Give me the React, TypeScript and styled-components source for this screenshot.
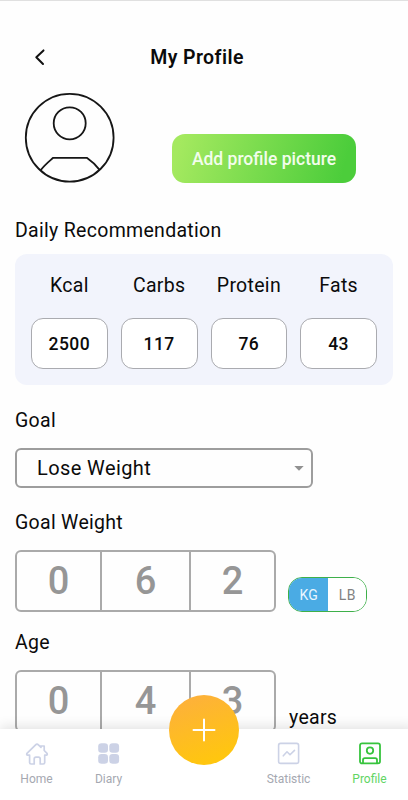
import React from "react";
import styled, { createGlobalStyle } from "styled-components";

const GlobalStyle = createGlobalStyle`
  * { box-sizing: border-box; }
  body { margin: 0; background: #fff; font-family: Roboto, "Liberation Sans", sans-serif; color: #0b0b0b; }
  button { font: inherit; color: inherit; background: none; border: 0; padding: 0; margin: 0; }
`;

const Screen = styled.div`
  width: 408px;
  height: 800px;
  display: flex;
  flex-direction: column;
  overflow: hidden;
  border-top: 1px solid #e0e0e0;
  background: #fefefe;
`;

const Content = styled.main`
  flex: 1;
  min-height: 0;
  overflow: hidden;
  padding: 32px 15px 0;
`;

const Header = styled.header`
  display: grid;
  grid-template-columns: 49px 1fr 63px;
  align-items: center;
  height: 48px;
`;

const BackButton = styled.button`
  display: flex;
  justify-content: center;
  svg { display: block; }
`;

const Title = styled.h1`
  margin: 0;
  padding-top: 2px;
  font-size: 19.5px;
  line-height: 24px;
  font-weight: 600;
  letter-spacing: 0.42px;
  text-align: center;
`;

const ProfileRow = styled.section`
  display: flex;
  align-items: flex-end;
  height: 102px;
  padding-left: 9px;
`;

const PictureButton = styled.button`
  width: 184px;
  height: 49px;
  margin-left: 57px;
  border-radius: 13px;
  background: linear-gradient(105deg, #a4e95f 5%, #4ccd3b 92%);
  color: #f2fdec;
  font-size: 17.5px;
  font-weight: 500;
  letter-spacing: 0;
`;

const Label = styled.h2<{ $top: number; $bottom: number }>`
  margin: 0;
  padding-top: ${(p) => p.$top}px;
  padding-bottom: ${(p) => p.$bottom}px;
  font-size: 19.5px;
  line-height: 24px;
  font-weight: 400;
  letter-spacing: 0.3px;
`;

const NutrientPanel = styled.section`
  display: grid;
  grid-template-columns: repeat(4, 1fr);
  column-gap: 13px;
  height: 131px;
  padding: 19px 16px 0;
  border-radius: 12px;
  background: #f2f4fc;
`;

const Nutrient = styled.div`
  display: flex;
  flex-direction: column;
  align-items: center;
  white-space: nowrap;
`;

const NutrientName = styled.span`
  font-size: 19.5px;
  line-height: 26px;
  letter-spacing: 0.3px;
`;

const NutrientValue = styled.span`
  display: flex;
  align-items: center;
  justify-content: center;
  width: 100%;
  height: 51px;
  margin-top: 19px;
  border: 1px solid #aaabb0;
  border-radius: 12px;
  background: #fff;
  font-size: 17.5px;
  font-weight: 500;
  letter-spacing: 0.5px;
`;

const GoalSelect = styled.button`
  display: flex;
  align-items: center;
  justify-content: space-between;
  width: 298px;
  height: 40px;
  padding: 0 7px 0 20px;
  border: 2px solid #9d9d9d;
  border-radius: 6px;
  font-size: 20px;
  letter-spacing: 0.4px;
`;

const InputRow = styled.div`
  display: flex;
  align-items: flex-end;
  gap: 12px;
  height: 62px;
`;

const DigitGroup = styled.div`
  display: grid;
  grid-template-columns: 85px 89px 1fr;
  width: 261px;
  height: 62px;
  border: 2px solid #aaa;
  border-radius: 6px;
`;

const Digit = styled.span`
  display: flex;
  align-items: center;
  justify-content: center;
  font-size: 38px;
  line-height: 58px;
  font-weight: 500;
  color: #969696;
  &:not(:last-child) { border-right: 2px solid #aaa; }
`;

const UnitToggle = styled.div`
  display: flex;
  width: 79px;
  height: 35px;
  overflow: hidden;
  border: 1.5px solid #3eb04a;
  border-radius: 14px;
`;

const Unit = styled.button<{ $active?: boolean }>`
  flex: 1;
  padding-left: 1px;
  background: ${(p) => (p.$active ? "#4aabe4" : "#fff")};
  color: ${(p) => (p.$active ? "#e9f6ff" : "#828282")};
  font-size: 14px;
  letter-spacing: 0.3px;
`;

const UnitText = styled.span`
  align-self: flex-end;
  padding: 0 0 2px 1px;
  font-size: 19.5px;
  line-height: 24px;
  letter-spacing: 0.3px;
`;

const NavBar = styled.nav`
  position: relative;
  flex: none;
  display: grid;
  grid-template-columns: 73px 71px 108px 73px 89px;
  width: 414px;
  height: 71px;
  background: #fff;
  box-shadow: 0 -2px 12px rgba(0, 0, 0, 0.12);
`;

const NavItem = styled.button<{ $active?: boolean }>`
  display: flex;
  flex-direction: column;
  align-items: center;
  padding-top: 13px;
  color: ${(p) => (p.$active ? "#62d564" : "#a5a8b1")};
  font-size: 12px;
  line-height: 14px;
  letter-spacing: 0;
  svg { display: block; margin-bottom: 6px; color: ${(p) => (p.$active ? "#37c43d" : "#ccd2e6")}; }
`;

const AddButton = styled.button`
  position: absolute;
  left: 169px;
  top: -34px;
  display: flex;
  align-items: center;
  justify-content: center;
  width: 70px;
  height: 70px;
  border-radius: 50%;
  background: linear-gradient(160deg, #fdb13a 10%, #ffc60f 85%);
`;

const nutrients = [
  { name: "Kcal", value: 2500 },
  { name: "Carbs", value: 117 },
  { name: "Protein", value: 76 },
  { name: "Fats", value: 43 },
];

const Avatar = () => (
  <svg width="91" height="91" viewBox="0 -1 91 91" fill="none" stroke="#161616" strokeWidth="1.8">
    <circle cx="45.7" cy="44.7" r="43.9" />
    <circle cx="45.7" cy="30.3" r="16" />
    <path d="M16.6 77.3C20.5 72 25 68.5 29.2 64.8H62.8C67.5 68 71.5 71.7 75.6 76.9" strokeLinejoin="round" />
  </svg>
);

const HomeIcon = () => (
  <svg width="24" height="24" viewBox="0 0 24 24" fill="none" stroke="currentColor" strokeWidth="1.7" strokeLinejoin="round" strokeLinecap="round">
    <path d="M4.6 13.2H2.7C1.6 13.2 1.4 12 2.2 11.2L10.6 2.8C11.4 2 12.6 2 13.4 2.8L16 5.3V4H19.2V8.5L21.8 11.2C22.6 12 22.3 13.2 21.3 13.2H19.7V20.5C19.7 21.4 19.1 22 18.2 22H15.2V17C15.2 15.8 14.6 15.2 13.4 15.2H11C9.8 15.2 9.2 15.8 9.2 17V22H6.1C5.2 22 4.6 21.4 4.6 20.5Z" />
  </svg>
);

const DiaryIcon = () => (
  <svg width="24" height="24" viewBox="0 0 24 24" fill="currentColor">
    <rect x="1.2" y="1.2" width="9.8" height="9.5" rx="3.3" />
    <rect x="12.3" y="1.2" width="9.8" height="9.5" rx="3.3" />
    <rect x="1.2" y="12" width="9.8" height="9.8" rx="3.3" />
    <rect x="12.3" y="12" width="9.8" height="9.8" rx="3.3" />
  </svg>
);

const StatisticIcon = () => (
  <svg width="24" height="24" viewBox="0 0 24 24" fill="none" stroke="currentColor" strokeWidth="1.6" strokeLinejoin="round" strokeLinecap="round">
    <rect x="1.6" y="1.4" width="20" height="20" rx="2" />
    <path d="M6.3 13.8L10 9.8L13 12.8L17.5 8.4" />
  </svg>
);

const ProfileIcon = () => (
  <svg width="24" height="24" viewBox="0 0 24 24" fill="none" stroke="currentColor" strokeWidth="1.8" strokeLinejoin="round">
    <rect x="2" y="1.4" width="20" height="20" rx="2" />
    <circle cx="12" cy="8.6" r="3.2" />
    <path d="M5 21.4V18C5 16.8 5.7 16.1 6.9 16.1H17.1C18.3 16.1 19 16.8 19 18V21.4" />
  </svg>
);

function DigitInput({ digits }: { digits: string }) {
  return (
    <DigitGroup>
      {digits.split("").map((digit, i) => (
        <Digit key={i}>{digit}</Digit>
      ))}
    </DigitGroup>
  );
}

export default function App() {
  return (
    <>
      <GlobalStyle />
      <Screen>
        <Content>
          <Header>
            <BackButton aria-label="Back">
              <svg width="12" height="18" viewBox="0 0 12 18" fill="none" stroke="#111" strokeWidth="2" strokeLinecap="round" strokeLinejoin="round">
                <path d="M9.5 2.4L2.3 9.2L9 16" />
              </svg>
            </BackButton>
            <Title>My Profile</Title>
          </Header>
          <ProfileRow>
            <Avatar />
            <PictureButton>Add profile picture</PictureButton>
          </ProfileRow>
          <Label $top={36} $bottom={11}>Daily Recommendation</Label>
          <NutrientPanel>
            {nutrients.map((n) => (
              <Nutrient key={n.name}>
                <NutrientName>{n.name}</NutrientName>
                <NutrientValue>{n.value}</NutrientValue>
              </Nutrient>
            ))}
          </NutrientPanel>
          <Label $top={24} $bottom={15}>Goal</Label>
          <GoalSelect>
            Lose Weight
            <svg width="10" height="5" viewBox="0 0 10 5" fill="#919191">
              <path d="M0.3 0H9.7L5 4.8Z" />
            </svg>
          </GoalSelect>
          <Label $top={23} $bottom={15}>Goal Weight</Label>
          <InputRow>
            <DigitInput digits="062" />
            <UnitToggle>
              <Unit $active>KG</Unit>
              <Unit>LB</Unit>
            </UnitToggle>
          </InputRow>
          <Label $top={19} $bottom={15}>Age</Label>
          <InputRow>
            <DigitInput digits="043" />
            <UnitText>years</UnitText>
          </InputRow>
        </Content>
        <NavBar>
          <NavItem><HomeIcon />Home</NavItem>
          <NavItem><DiaryIcon />Diary</NavItem>
          <span />
          <NavItem><StatisticIcon />Statistic</NavItem>
          <NavItem $active><ProfileIcon />Profile</NavItem>
          <AddButton aria-label="Add">
            <svg width="24" height="24" viewBox="0 0 24 24" stroke="#fff" strokeWidth="2" strokeLinecap="round">
              <path d="M12 1.5V22.5M1.5 12H22.5" />
            </svg>
          </AddButton>
        </NavBar>
      </Screen>
    </>
  );
}
